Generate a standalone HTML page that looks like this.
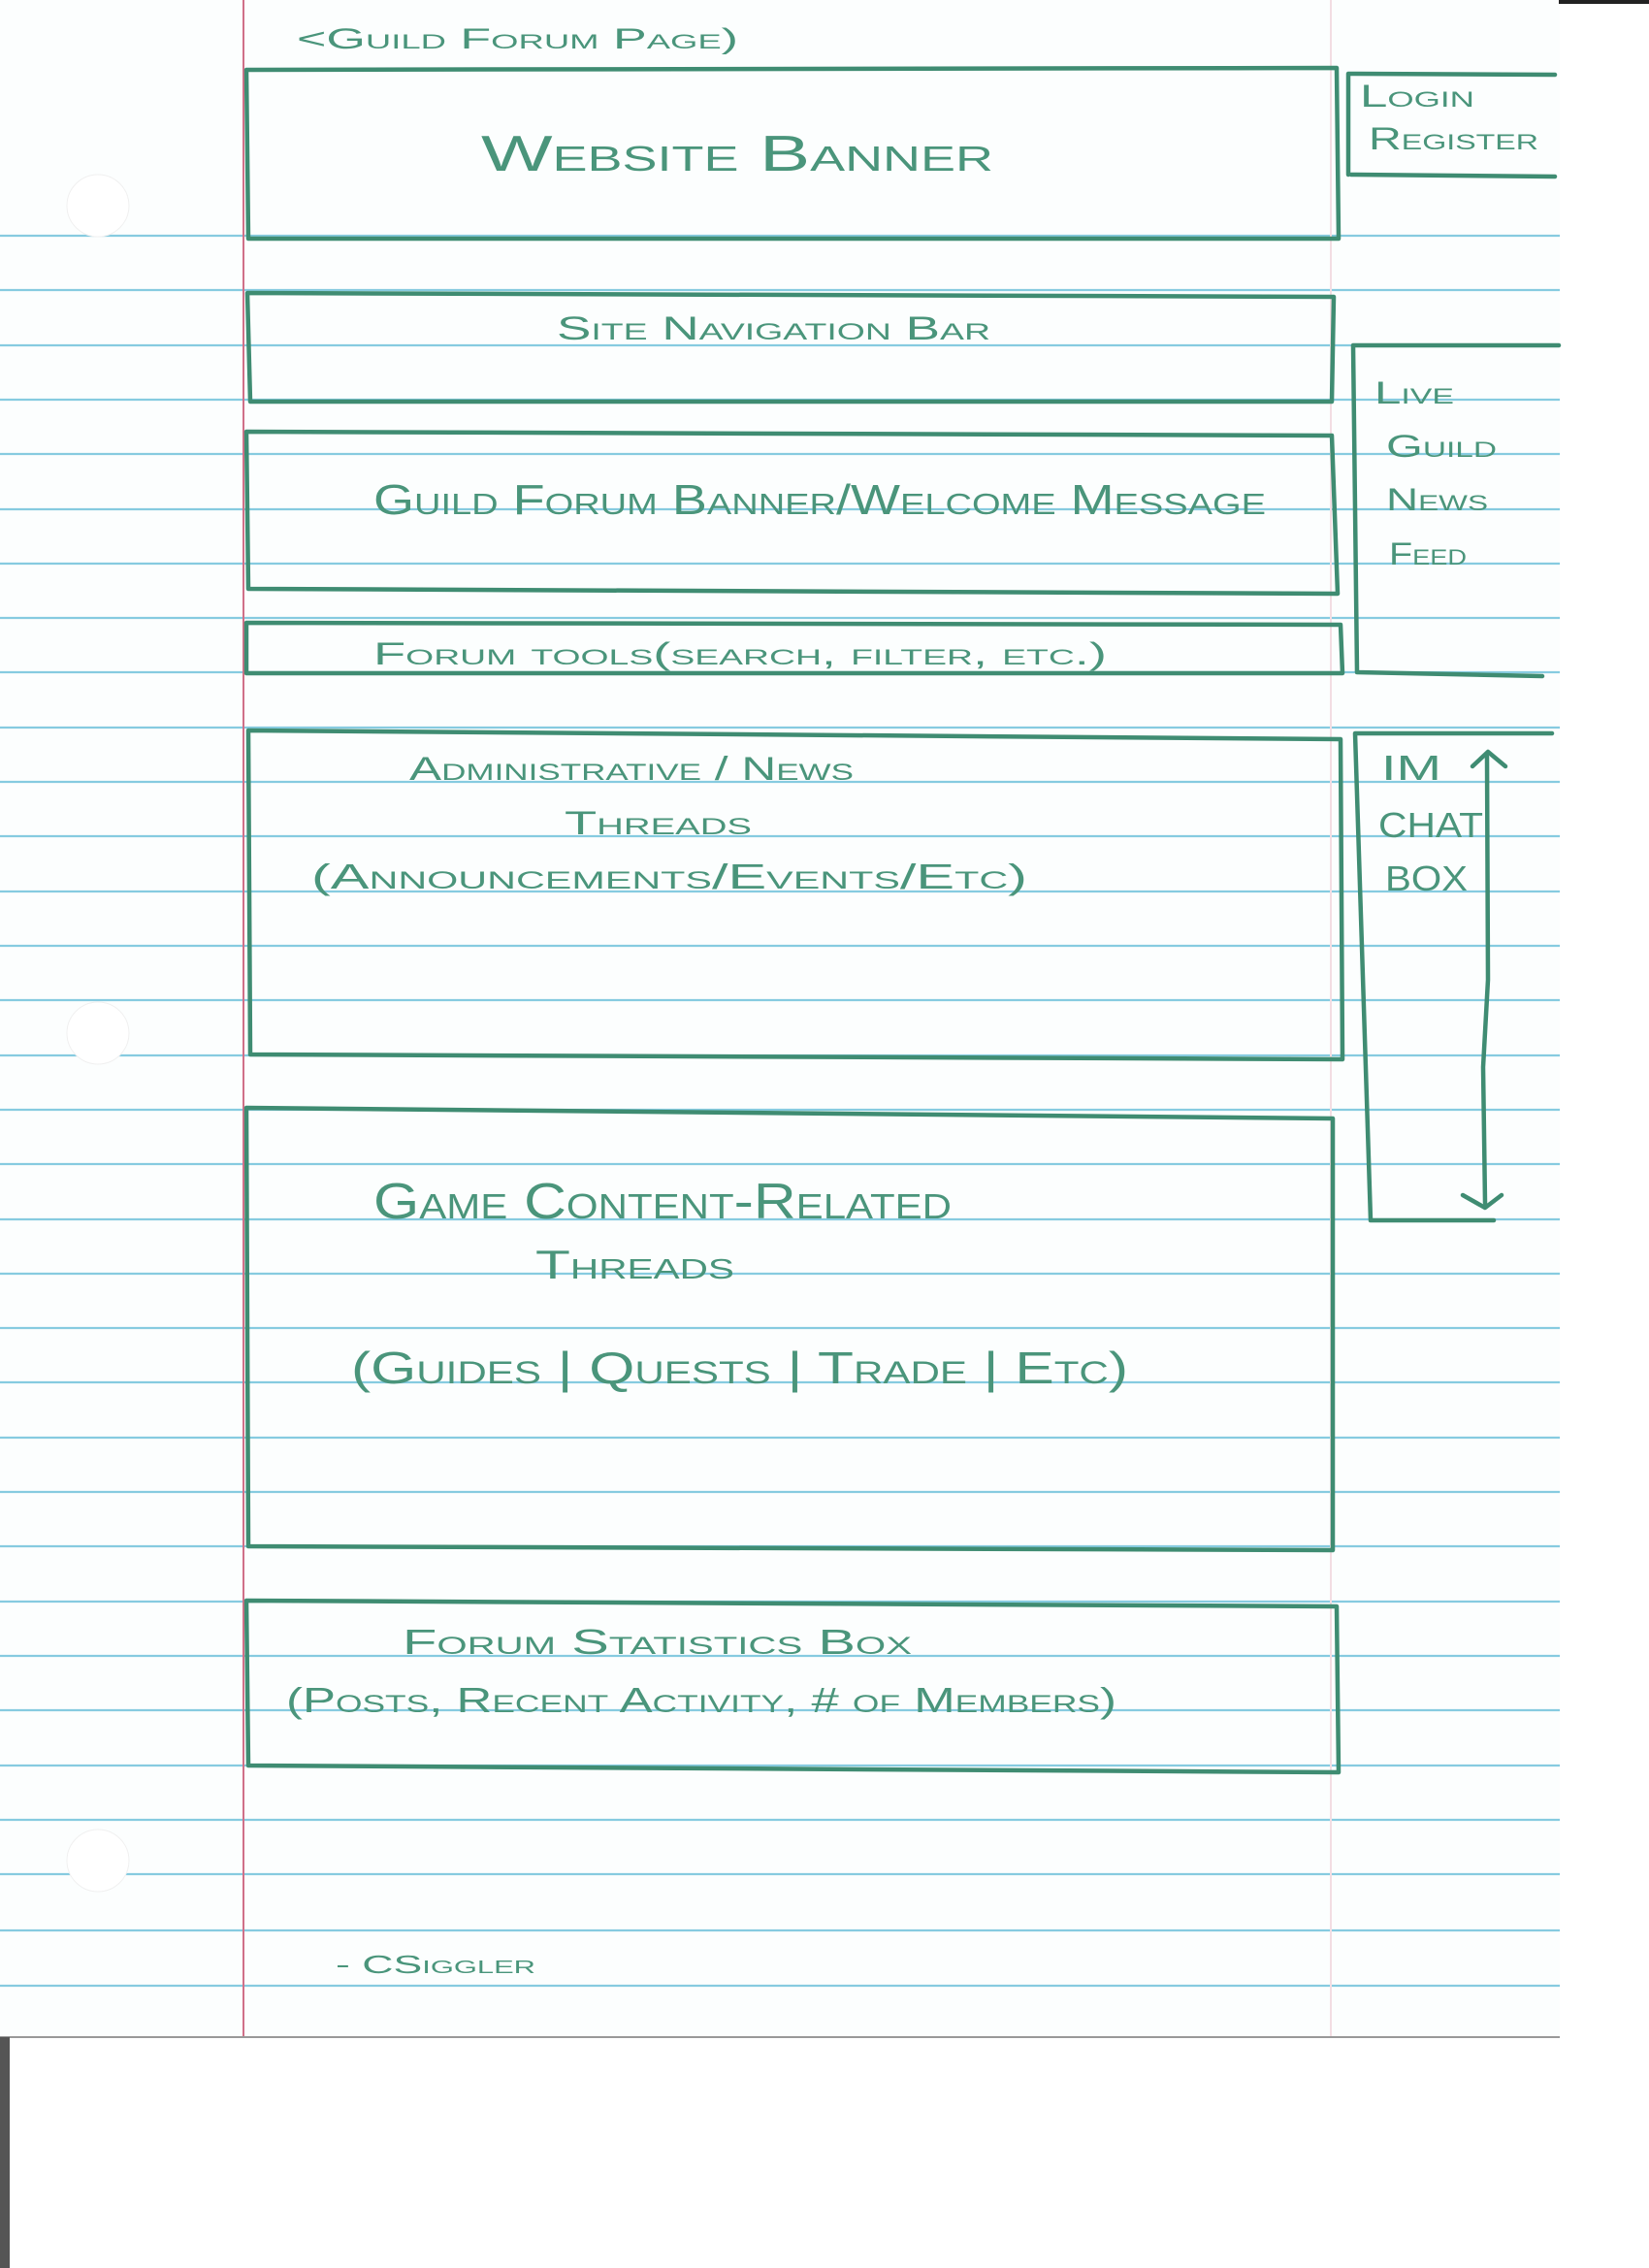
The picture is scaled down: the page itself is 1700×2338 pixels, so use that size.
<!DOCTYPE html>
<html><head><meta charset="utf-8"><style>
html,body{margin:0;padding:0;background:#fff;}
svg{display:block;}
text{font-family:"Liberation Sans",sans-serif;fill:#4a957b;font-variant:small-caps;}
</style></head><body>
<svg width="1700" height="2338" viewBox="0 0 1700 2338" xmlns="http://www.w3.org/2000/svg">
<rect x="0" y="0" width="1700" height="2338" fill="#fff"/>
<rect x="0" y="0" width="1608" height="2100" fill="#fcfefe"/>
<g stroke="#86cbe0" stroke-width="2.2">
<line x1="0" y1="243" x2="1608" y2="243"/><line x1="0" y1="299" x2="1608" y2="299"/><line x1="0" y1="356" x2="1608" y2="356"/><line x1="0" y1="412" x2="1608" y2="412"/><line x1="0" y1="468" x2="1608" y2="468"/><line x1="0" y1="525" x2="1608" y2="525"/><line x1="0" y1="581" x2="1608" y2="581"/><line x1="0" y1="637" x2="1608" y2="637"/><line x1="0" y1="693" x2="1608" y2="693"/><line x1="0" y1="750" x2="1608" y2="750"/><line x1="0" y1="806" x2="1608" y2="806"/><line x1="0" y1="862" x2="1608" y2="862"/><line x1="0" y1="919" x2="1608" y2="919"/><line x1="0" y1="975" x2="1608" y2="975"/><line x1="0" y1="1031" x2="1608" y2="1031"/><line x1="0" y1="1088" x2="1608" y2="1088"/><line x1="0" y1="1144" x2="1608" y2="1144"/><line x1="0" y1="1200" x2="1608" y2="1200"/><line x1="0" y1="1257" x2="1608" y2="1257"/><line x1="0" y1="1313" x2="1608" y2="1313"/><line x1="0" y1="1369" x2="1608" y2="1369"/><line x1="0" y1="1425" x2="1608" y2="1425"/><line x1="0" y1="1482" x2="1608" y2="1482"/><line x1="0" y1="1538" x2="1608" y2="1538"/><line x1="0" y1="1594" x2="1608" y2="1594"/><line x1="0" y1="1651" x2="1608" y2="1651"/><line x1="0" y1="1707" x2="1608" y2="1707"/><line x1="0" y1="1763" x2="1608" y2="1763"/><line x1="0" y1="1820" x2="1608" y2="1820"/><line x1="0" y1="1876" x2="1608" y2="1876"/><line x1="0" y1="1932" x2="1608" y2="1932"/><line x1="0" y1="1990" x2="1608" y2="1990"/><line x1="0" y1="2047" x2="1608" y2="2047"/>
</g>
<line x1="251" y1="0" x2="251" y2="2100" stroke="#d07088" stroke-width="2"/>
<line x1="1372" y1="0" x2="1372" y2="2100" stroke="#f3dde3" stroke-width="2"/>
<line x1="0" y1="2100" x2="1608" y2="2100" stroke="#999" stroke-width="2"/>
<rect x="0" y="2100" width="10" height="238" fill="#555"/>
<rect x="1607" y="0" width="93" height="4" fill="#222"/>
<g fill="#fff" stroke="#f0f0f0" stroke-width="1">
<circle cx="101" cy="212" r="32"/><circle cx="101" cy="1065" r="32"/><circle cx="101" cy="1918" r="32"/>
</g>
<g fill="none" stroke="#3f8c72" stroke-width="4.5" stroke-linecap="round" stroke-linejoin="round">
<path d="M254 72 L1378 70 L1380 246 L256 246 Z"/>
<path d="M1390 180 L1390 76 L1603 77 M1393 180 L1603 182"/>
<path d="M255 302 L1375 306 L1373 414 L258 414 Z"/>
<path d="M254 445 L1373 449 L1379 612 L256 607 Z"/>
<path d="M254 642 L1382 644 L1384 694 L254 694 Z"/>
<path d="M1395 356 L1607 356 M1395 356 L1399 693 L1590 697"/>
<path d="M256 753 L1382 762 L1384 1092 L258 1087 Z"/>
<path d="M1397 756 L1600 756 M1397 756 L1413 1258 L1540 1258"/>
<path d="M1531 1240 L1529 1100 L1534 1010 L1533 780 M1518 790 L1534 775 L1552 790 M1508 1232 L1531 1245 L1548 1232"/>
<path d="M254 1142 L1374 1153 L1374 1598 L256 1594 Z"/>
<path d="M254 1650 L1378 1656 L1380 1827 L256 1820 Z"/>
</g>
<text x="306" y="50" font-size="30" textLength="455" lengthAdjust="spacingAndGlyphs">&lt;Guild Forum Page)</text>
<text x="496" y="176" font-size="52" textLength="528" lengthAdjust="spacingAndGlyphs">Website Banner</text>
<text x="1402" y="110" font-size="32" textLength="118" lengthAdjust="spacingAndGlyphs">Login</text>
<text x="1411" y="154" font-size="32" textLength="175" lengthAdjust="spacingAndGlyphs">Register</text>
<text x="574" y="350" font-size="34" textLength="447" lengthAdjust="spacingAndGlyphs">Site Navigation Bar</text>
<text x="385" y="530" font-size="44" textLength="920" lengthAdjust="spacingAndGlyphs">Guild Forum Banner/Welcome Message</text>
<text x="385" y="685" font-size="32" textLength="756" lengthAdjust="spacingAndGlyphs">Forum tools(search, filter, etc.)</text>
<text x="1417" y="416" font-size="32" textLength="82" lengthAdjust="spacingAndGlyphs">Live</text>
<text x="1429" y="471" font-size="32" textLength="114" lengthAdjust="spacingAndGlyphs">Guild</text>
<text x="1429" y="526" font-size="32" textLength="105" lengthAdjust="spacingAndGlyphs">News</text>
<text x="1432" y="582" font-size="32" textLength="80" lengthAdjust="spacingAndGlyphs">Feed</text>
<text x="422" y="804" font-size="34" textLength="458" lengthAdjust="spacingAndGlyphs">Administrative / News</text>
<text x="582" y="860" font-size="34" textLength="193" lengthAdjust="spacingAndGlyphs">Threads</text>
<text x="321" y="916" font-size="36" textLength="738" lengthAdjust="spacingAndGlyphs">(Announcements/Events/Etc)</text>
<text x="1424" y="804" font-size="36" textLength="62" lengthAdjust="spacingAndGlyphs">IM</text>
<text x="1421" y="863" font-size="36" textLength="108" lengthAdjust="spacingAndGlyphs">CHAT</text>
<text x="1428" y="918" font-size="36" textLength="85" lengthAdjust="spacingAndGlyphs">BOX</text>
<text x="385" y="1256" font-size="52" textLength="596" lengthAdjust="spacingAndGlyphs">Game Content-Related</text>
<text x="552" y="1318" font-size="42" textLength="205" lengthAdjust="spacingAndGlyphs">Threads</text>
<text x="362" y="1426" font-size="46" textLength="801" lengthAdjust="spacingAndGlyphs">(Guides | Quests | Trade | Etc)</text>
<text x="415" y="1705" font-size="36" textLength="525" lengthAdjust="spacingAndGlyphs">Forum Statistics    Box</text>
<text x="295" y="1765" font-size="36" textLength="856" lengthAdjust="spacingAndGlyphs">(Posts, Recent Activity, # of Members)</text>
<text x="346" y="2034" font-size="26" textLength="206" lengthAdjust="spacingAndGlyphs">- CSiggler</text>
</svg>
</body></html>
